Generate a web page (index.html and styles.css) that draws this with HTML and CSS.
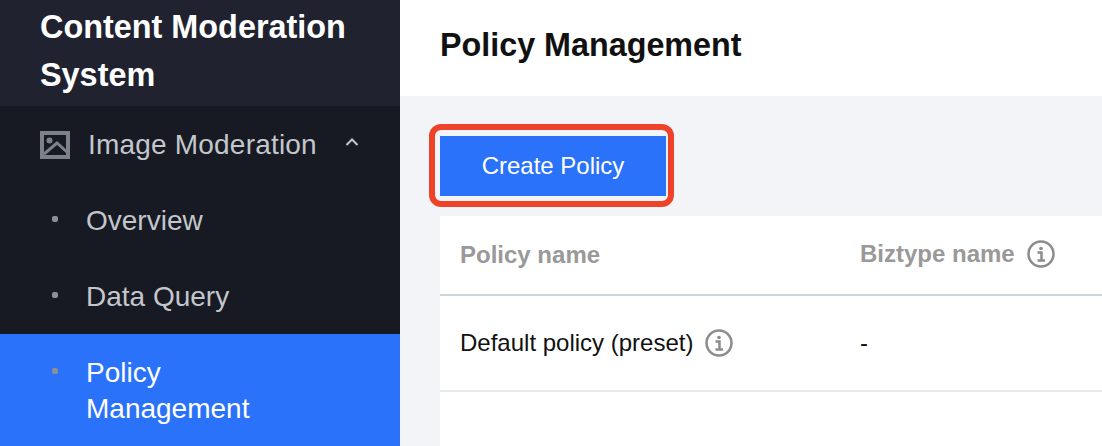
FILE: index.html
```html
<!DOCTYPE html>
<html>
<head lang="en">
    <meta charset="UTF-8">
    <title>Policy Management</title>
    <link rel="stylesheet" href="styles.css">
</head>
<body>
<div class="sidebar">
    <div class="brand">Content Moderation System</div>
    <ul class="menu">
        <li class="group">
            <svg class="group-icon" width="30" height="28" viewBox="0 0 30 28">
                <path fill="#7b8289" fill-rule="evenodd" d="M0 0H30V28H0ZM4 4V24H26V4Z"/>
                <circle cx="9.500" cy="9.500" r="3" fill="#7b8289"/>
                <path fill="none" stroke="#7b8289" stroke-width="3" d="M4 23L17 12L27 21"/>
            </svg>
            <span class="group-name">Image Moderation</span>
            <svg class="arrow" width="14" height="10" viewBox="0 0 14 10">
                <path fill="none" stroke="#c3c7cc" stroke-width="2" d="M1.500 8L7 2.500L12.500 8"/>
            </svg>
        </li>
        <li class="item"><i class="dot"></i><span>Overview</span></li>
        <li class="item"><i class="dot"></i><span>Data Query</span></li>
        <li class="item active"><i class="dot"></i><span>Policy<br>Management</span></li>
    </ul>
</div>
<div class="main">
    <div class="title">Policy Management</div>
    <div class="content">
        <div class="toolbar">
            <button class="create">Create Policy</button>
        </div>
        <div class="table">
            <div class="row head">
                <div class="cell name">Policy name</div>
                <div class="cell biz">
                    Biztype name
                    <svg class="info" width="28" height="28" viewBox="0 0 28 28">
                        <circle cx="14" cy="14" r="12.500" fill="none" stroke="#8c8c8c" stroke-width="2.500"/>
                        <circle cx="14" cy="8.500" r="1.800" fill="#8c8c8c"/>
                        <path fill="none" stroke="#8c8c8c" stroke-width="2.500" d="M10.500 12.500H14.500V20M10.500 20.500H18"/>
                    </svg>
                </div>
            </div>
            <div class="row">
                <div class="cell name">
                    Default policy (preset)
                    <svg class="info" width="28" height="28" viewBox="0 0 28 28">
                        <circle cx="14" cy="14" r="12.500" fill="none" stroke="#8c8c8c" stroke-width="2.500"/>
                        <circle cx="14" cy="8.500" r="1.800" fill="#8c8c8c"/>
                        <path fill="none" stroke="#8c8c8c" stroke-width="2.500" d="M10.500 12.500H14.500V20M10.500 20.500H18"/>
                    </svg>
                </div>
                <div class="cell biz">-</div>
            </div>
        </div>
    </div>
</div>
</body>
</html>
```

FILE: styles.css
```css
*{
    margin: 0;
    padding: 0;
    box-sizing: border-box;
}
ul{
    list-style: none;
}
html,
body{
    height: 100%;
    overflow: hidden;
}
body{
    display: flex;
    font-family: "Liberation Sans", Arial, sans-serif;
    background: #f2f4f8;
}
.sidebar{
    width: 400px;
    flex-shrink: 0;
    background: #171a23;
}
.brand{
    height: 106px;
    padding: 3px 40px 0;
    background: #20232f;
    color: #fff;
    font-size: 32.400px;
    font-weight: 700;
    line-height: 48px;
}
.group,
.item{
    display: flex;
    align-items: center;
    height: 76px;
    padding-top: 2px;
    font-size: 28px;
    color: #c3c7cc;
}
.group{
    padding-left: 40px;
}
.group-icon{
    flex-shrink: 0;
}
.group-name{
    margin-left: 18px;
    letter-spacing: .2px;
}
.arrow{
    margin-left: 28px;
    margin-bottom: 6px;
}
.item{
    padding-left: 52px;
}
.dot{
    width: 6px;
    height: 6px;
    border-radius: 2px;
    background: #8c9096;
    margin-right: 28px;
    margin-bottom: 5px;
    flex-shrink: 0;
}
.active{
    height: 112px;
    align-items: flex-start;
    padding-top: 21px;
    background: #2a72f9;
    color: #fff;
    line-height: 36px;
}
.active .dot{
    margin-top: 13px;
}
.main{
    flex: 1;
    display: flex;
    flex-direction: column;
    min-width: 0;
}
.title{
    height: 96px;
    padding: 0 40px;
    background: #fff;
    color: #111;
    font-size: 32.300px;
    font-weight: 700;
    line-height: 90px;
}
.content{
    flex: 1;
    display: flex;
    flex-direction: column;
    padding: 40px 0 0 40px;
}
.toolbar{
    height: 80px;
}
.create{
    position: relative;
    display: block;
    width: 226px;
    height: 60px;
    border: none;
    background: #2a72f9;
    color: #fff;
    font-family: inherit;
    font-size: 24px;
}
.create:after{
    content: "";
    position: absolute;
    left: -11px;
    top: -12px;
    right: -8px;
    bottom: -11px;
    border: 6px solid #ee4329;
    border-radius: 12px;
}
.table{
    flex: 1;
    background: #fff;
}
.row{
    display: flex;
    height: 96px;
    border-bottom: 2px solid #e7eaef;
    align-items: center;
    font-size: 24px;
    color: #111;
}
.head{
    height: 80px;
    border-bottom-color: #cfd5de;
    font-weight: 700;
    color: #999;
}
.head .biz{
    padding-bottom: 3px;
}
.cell{
    display: flex;
    align-items: center;
}
.name{
    width: 420px;
    padding-left: 20px;
}
.info{
    margin-left: 12px;
}
```
